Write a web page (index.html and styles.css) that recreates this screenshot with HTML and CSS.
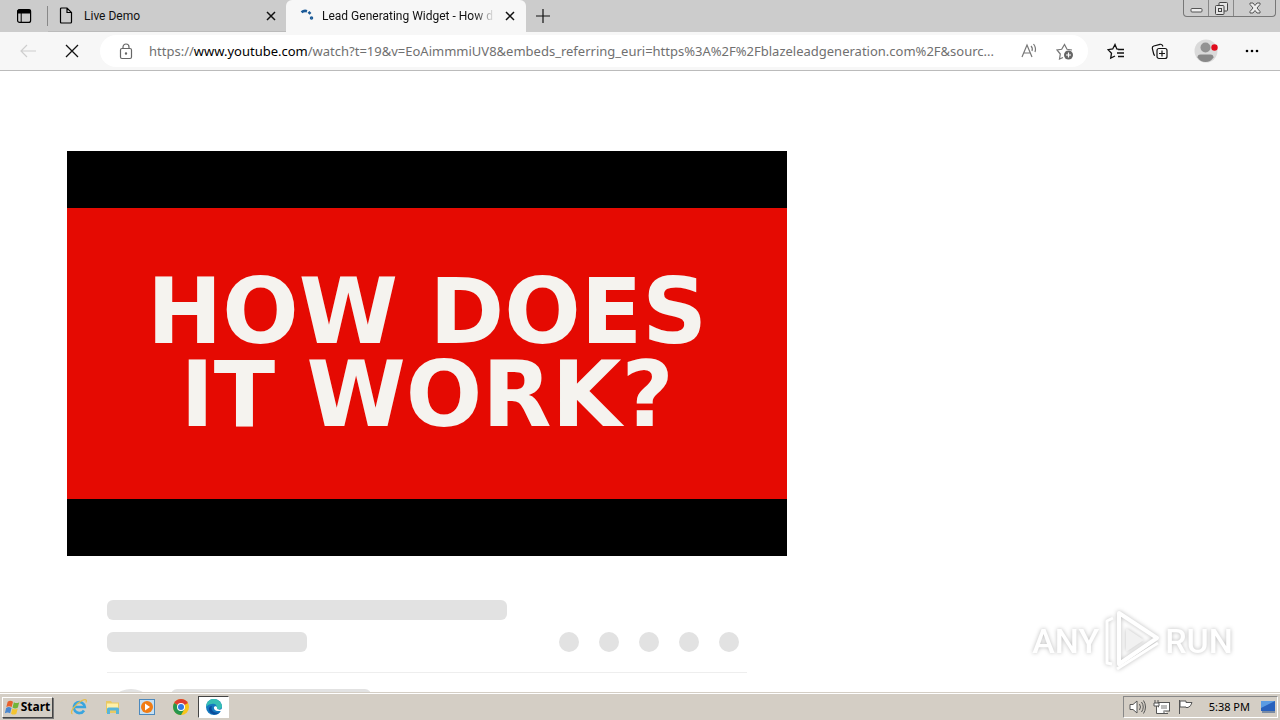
FILE: index.html
```html
<!DOCTYPE html>
<html lang="en">
<head>
<meta charset="utf-8">
<meta name="viewport" content="width=device-width, initial-scale=1">
<title>Lead Generating Widget - How does it work?</title>
<link rel="stylesheet" href="styles.css">
</head>
<body>
<header class="tabs">
  <button class="tab-actions" aria-label="Tab actions">
    <svg width="16" height="16" viewBox="0 0 16 16" fill="none" stroke="#000"><rect x="1.6" y="1.6" width="13" height="12.8" rx="2" stroke-width="1.2"/><path d="M2 2h12.500v3H2z" fill="#000"/><path d="M5.200 5v9"/></svg>
  </button>
  <div class="tab">
    <svg width="14" height="17" viewBox="0 0 14 17" fill="none" stroke="#000" stroke-width="1.200"><path d="M2.500 1H8l4.500 4.500V15q0 1-1 1h-9q-1 0-1-1V2q0-1 1-1zM8 1v4.500h4.500"/></svg>
    <span class="tab-title">Live Demo</span>
    <button class="close" aria-label="Close tab"><svg width="10" height="10" viewBox="0 0 10 10" stroke="#111" stroke-width="1.500"><path d="M1 1l8 8M9 1L1 9"/></svg></button>
  </div>
  <div class="tab active">
    <svg width="14" height="16" viewBox="0 0 14 16" fill="none" stroke="#1b5a97" stroke-width="2.600"><path d="M1.500 4.200Q4 2.300 7 3.200M8.500 3.900l2 2"/><circle cx="11.500" cy="10" r="1" stroke-width="1.500"/></svg>
    <span class="tab-title fade">Lead Generating Widget - How d</span>
    <button class="close" aria-label="Close tab"><svg width="10" height="10" viewBox="0 0 10 10" stroke="#111" stroke-width="1.500"><path d="M1 1l8 8M9 1L1 9"/></svg></button>
  </div>
  <button class="new-tab" aria-label="New tab"><svg width="14" height="14" viewBox="0 0 14 14" stroke="#111" stroke-width="1.200"><path d="M7 0v14M0 7h14"/></svg></button>
  <div class="window-buttons">
    <button aria-label="Minimize"><svg width="13" height="12" viewBox="0 0 13 12" fill="#eee" stroke="#555"><rect x="1" y="6.500" width="11" height="3.500" rx="1"/></svg></button>
    <button aria-label="Restore"><svg width="13" height="13" viewBox="0 0 13 13" fill="#e4e4e4" stroke="#444"><rect x="4" y=".5" width="8.500" height="8.500" rx="1"/><rect x=".5" y="3.500" width="8.500" height="9" rx="1"/><rect x="3.500" y="6.500" width="3" height="3"/></svg></button>
    <button class="wide" aria-label="Close"><svg width="12" height="12" viewBox="0 0 12 12" fill="#eee" stroke="#555"><path d="M1 1h3l2 2.500L8 1h3v1.500L8 6l3 3.500V11H8L6 8.500 4 11H1V9.500L4 6 1 2.500z"/></svg></button>
  </div>
</header>
<nav class="toolbar">
  <button class="nav" aria-label="Back" disabled><svg width="17" height="14" viewBox="0 0 17 14" fill="none" stroke="#cecece" stroke-width="1.200"><path d="M16 7H1M7 1L1 7l6 6"/></svg></button>
  <button class="nav stop" aria-label="Stop loading"><svg width="14" height="14" viewBox="0 0 14 14" stroke="#111" stroke-width="1.300"><path d="M1 1l12 12M13 1L1 13"/></svg></button>
  <div class="address">
    <button aria-label="Site information"><svg width="14" height="17" viewBox="0 0 14 17" fill="none" stroke="#666" stroke-width="1.200"><rect x="1.500" y="5.500" width="11" height="10" rx="1.500"/><path d="M4 5.500V4a3 3 0 0 1 6 0v1.500"/><circle cx="7" cy="10.500" r=".6" fill="#666"/></svg></button>
    <div class="url" role="textbox" aria-label="Address" contenteditable="true" spellcheck="false">https://<b>www.youtube.com</b>/watch?t=19&amp;v=EoAimmmiUV8&amp;embeds_referring_euri=https%3A%2F%2Fblazeleadgeneration.com%2F&amp;sourc...</div>
    <button aria-label="Read aloud"><svg width="17" height="16" viewBox="0 0 17 16" fill="none" stroke="#777" stroke-width="1.200"><path d="M1 14L6 2l5 12M3 10h6M10 3q2 2 1 5M12.500 1q3 4 1.500 8"/></svg></button>
    <button aria-label="Add to favorites"><svg width="18" height="17" viewBox="0 0 18 17" fill="none" stroke="#777" stroke-width="1.200"><path d="M7 14.500l-3.500 1.500.8-5L1 7l4.700-.7L8.500 1.500l2.500 4.800 5 .7"/><circle cx="12.500" cy="12" r="4.500" fill="#666" stroke="none"/><path d="M12.500 9.500v5M10 12h5" stroke="#fff"/></svg></button>
  </div>
  <button class="tool" aria-label="Favorites"><svg width="18" height="17" viewBox="0 0 18 17" fill="none" stroke="#111" stroke-width="1.300"><path d="M12 6.300L9.800 6 8 1.500 5.700 6 1 6.700l3.500 3.500-.8 5L8 13M11 6.500h6M10 10h7M11 13.500h6"/></svg></button>
  <button class="tool" aria-label="Collections"><svg width="18" height="17" viewBox="0 0 18 17" fill="none" stroke="#111" stroke-width="1.200"><rect x="6" y="5.500" width="10" height="10" rx="2"/><path d="M11 7.500v6M8 10.500h6M4 12.500q-1-.3-1.300-1.500L1.300 5.500Q1 3.500 2.800 3L9 1.300q2-.3 2.600 1.400l.3.800"/></svg></button>
  <button class="tool profile" aria-label="Profile"><svg width="24" height="24" viewBox="0 0 24 24"><circle cx="12" cy="12" r="11.500" fill="#dadada"/><circle cx="11.500" cy="8.500" r="5" fill="#929292"/><path d="M3.500 18.500q0-3 3-3h10q3 0 3 3-3 4.500-8 4.500t-8-4.500z" fill="#888"/><circle cx="20.500" cy="8.500" r="3.200" fill="#e00b1c"/></svg></button>
  <button class="tool" aria-label="Settings and more"><svg width="14" height="4" viewBox="0 0 14 4"><circle cx="2" cy="2" r="1.300"/><circle cx="7" cy="2" r="1.300"/><circle cx="12" cy="2" r="1.300"/></svg></button>
</nav>
<main class="page">
  <section class="watch">
    <div class="player"><h1><span>HOW DOES</span><span>IT WORK?</span></h1></div>
    <div class="skeleton">
      <div class="bar long"></div>
      <div class="row"><div class="bar"></div><div class="dots"><i></i><i></i><i></i><i></i><i></i></div></div>
      <div class="owner"><div class="avatar"></div><div class="bar"></div></div>
    </div>
  </section>
  <div class="watermark"><span>ANY</span>
    <svg width="60" height="62" viewBox="0 0 60 62" fill="none" stroke="#fff" stroke-width="4" stroke-linejoin="round"><path d="M17 48V3l38 25L17 54V13"/><path d="M11 8L5 11v42l5 1M15 59l41-26" stroke-width="3"/><path d="M24 18l18 12-18 12z" fill="#f1f1f1" stroke="none"/></svg>
    <span>RUN</span></div>
</main>
<footer class="taskbar">
  <button class="start"><svg width="16" height="17" viewBox="0 0 18 17"><path d="M3 2q3-2 6 0L7.500 8q-3-2-6 0z" fill="#e8602c"/><path d="M10 2.500q3 2 6 0l-1.500 6q-3 2-6 0z" fill="#72b43a"/><path d="M1.300 9q3-2 6 0l-1.500 6q-3-2-6 0z" fill="#4a87cf"/><path d="M8.300 9.500q3 2 6 0l-1.500 6q-3 2-6 0z" fill="#f4c430"/></svg>Start</button>
  <button class="task" aria-label="Internet Explorer"><svg width="18" height="18" viewBox="0 0 18 18" fill="none"><path d="M14 12.500a5.500 5.500 0 1 1 .8-3.500H5" stroke="#39a5df" stroke-width="2.600"/><path d="M2.500 16C-1 15 5 6 12 2.500c4-2 5-.5 4 2" stroke="#e5bd4a" stroke-width="1.300"/></svg></button>
  <button class="task" aria-label="Windows Explorer"><svg width="18" height="18" viewBox="0 0 18 18"><path d="M2 3h5l1 1.500h7V15H2z" fill="#e9c963"/><path d="M3 5.500h11V12H3z" fill="#fff0a8"/><path d="M3 16v-5q0-1.500 1.500-1.500h9Q15 9.500 15 11v5h-3v-3.500H6V16z" fill="#58b5d9"/></svg></button>
  <button class="task" aria-label="Media Player"><svg width="18" height="18" viewBox="0 0 18 18"><rect x="1.500" y="1.500" width="15" height="15" fill="#c6e0f3" stroke="#4c89bd"/><circle cx="9" cy="9" r="6" fill="#f17c13"/><path d="M7 5.500l5 3.500-5 3.500z" fill="#fff"/></svg></button>
  <button class="task" aria-label="Chrome"><svg width="18" height="18" viewBox="0 0 18 18"><circle cx="9" cy="9" r="8" fill="#f8c51b"/><path d="M9 9L2.100 5A8 8 0 0 1 15.900 5z" fill="#df3d31"/><path d="M9 9L2.100 5A8 8 0 0 0 9 17l3.500-6z" fill="#26964e"/><circle cx="9" cy="9" r="4" fill="#fff"/><circle cx="9" cy="9" r="3" fill="#327ae4"/></svg></button>
  <button class="task current" aria-label="Microsoft Edge"><svg width="18" height="18" viewBox="0 0 18 18"><circle cx="9" cy="9" r="8" fill="#1479bf"/><path d="M1.500 7C3-1 15-1 17 8c0 4-5 4-6 2 2-2-1-5-4-4Q3 6 1.500 9z" fill="#36bfb4"/><path d="M7 8c-2 4 2 8 7.500 6.500C10 19 3 15 4 10q.5-2 3-2z" fill="#0b4c9b"/><path d="M9 9c-.5 2 1 4 4 4h5l.5-2.500c-2 1.500-6 1.500-6.500 0 .5-2-2-3-3-1.500z" fill="#fff"/></svg></button>
  <div class="tray">
    <svg width="18" height="16" viewBox="0 0 18 16" fill="#fff" stroke="#555"><path d="M1 5.500h3L8 2v12l-4-3.500H1z"/><path d="M10.500 5q2 3 0 6M12.500 3q3.500 5 0 10M14.500 1.500q4 6.500 0 13" fill="none"/></svg>
    <svg width="18" height="16" viewBox="0 0 18 16" fill="#fff" stroke="#555"><rect x="5.500" y="3.500" width="11" height="8.500"/><rect x="8" y="6" width="6" height="4" fill="#bbb" stroke="none"/><path d="M2 1v3M5 1v3M1 4h5v3H1zM3.500 7v7.500H15M11 12v2"/></svg>
    <svg width="18" height="16" viewBox="0 0 18 16" fill="#fff" stroke="#555"><path d="M2.500 1v14M3 2h6v1.500h6q-1 4-4 5H9V8H3z"/></svg>
    <time>5:38 PM</time>
    <svg width="16" height="14" viewBox="0 0 16 14"><path d="M1 1h14v10H1z" fill="#2861bd"/><path d="M1 1h14L1 8z" fill="#5a9be3"/><path d="M2 12h13" stroke="#234a82"/></svg>
  </div>
</footer>
</body>
</html>
```
FILE: styles.css
```css
* { box-sizing: border-box; }
body { margin: 0; height: 100vh; display: flex; flex-direction: column; overflow: hidden; background: #fff; color: #111; font: 12px/16px "Noto Sans", sans-serif; }
button { display: flex; align-items: center; justify-content: center; flex: none; padding: 0; border: 0; background: none; color: inherit; font: inherit; }
svg { display: block; flex: none; }

.tabs { flex: none; height: 32px; display: flex; background: #ccc; font-family: Roboto, sans-serif; }
.tab-actions { width: 48px; border-right: 1px solid #888; margin: 6px 0; height: 20px; }
.tab { display: flex; align-items: center; gap: 11px; width: 238px; padding: 0 8px 0 11px; border-bottom: 1px solid #bbb; }
.tab.active { width: 240px; padding: 0 9px 0 14px; gap: 8px; border: 0; background: #f7f7f7; border-radius: 6px 6px 0 0; }
.tab-title { flex: 1; min-width: 0; white-space: nowrap; }
.fade { mask-image: linear-gradient(90deg, #000 88%, transparent); }
.close { width: 14px; height: 16px; }
.new-tab { width: 34px; }
.window-buttons { display: flex; height: 17px; margin: 0 4px 0 auto; border: 1px solid #777; border-top: 0; border-radius: 0 0 4px 4px; }
.window-buttons button { width: 25px; border-right: 1px solid #888; }
.window-buttons .wide { width: 41px; border: 0; }

.toolbar { flex: none; height: 39px; display: flex; align-items: center; padding: 0 6px; background: #f7f7f7; border-bottom: 1px solid #bbb; }
.nav { width: 44px; height: 28px; }
.address { flex: 1; min-width: 0; height: 32px; display: flex; align-items: center; margin: 0 6px; padding: 0 14px 0 19px; gap: 18px; background: #fff; border-radius: 16px; }
.url { flex: 1; min-width: 0; margin-left: -2px; white-space: nowrap; font-size: 13px; line-height: 20px; color: #707070; outline: 0; }
.url b { font-weight: 400; color: #000; }
.tool { width: 44px; height: 28px; }
.profile { width: 48px; }

.page { flex: 1; min-height: 0; position: relative; overflow: hidden; padding: 80px 67px 0; }
.watch { max-width: 720px; }
.player { aspect-ratio: 16 / 9; display: flex; align-items: center; background: #000; }
.player h1 { flex: 1; margin: 0; padding: 62px 0 63px; background: #e50a02; color: #f5f3ef; font: 700 90px/83px "DejaVu Sans", sans-serif; text-align: center; white-space: nowrap; }
.player h1 span { display: block; }
.skeleton { padding: 44px 40px 0; }
.bar { width: 200px; height: 20px; border-radius: 6px; background: #e2e2e2; }
.long { width: 400px; }
.row { display: flex; justify-content: space-between; margin-top: 12px; padding: 0 8px 20px 0; border-bottom: 1px solid #eee; }
.dots { display: flex; gap: 20px; }
.dots i { width: 20px; height: 20px; border-radius: 50%; background: #e2e2e2; }
.owner { display: flex; gap: 16px; padding: 16px 0 0 0; }
.avatar { width: 48px; height: 48px; border-radius: 50%; background: #e2e2e2; }

.watermark { position: absolute; right: 47px; bottom: 20px; display: flex; align-items: center; gap: 3px; color: #fff; font: 500 34px/40px Roboto, sans-serif; filter: drop-shadow(0 0 2px #bbb); }

.taskbar { flex: none; height: 28px; display: flex; align-items: center; padding: 2px 2px 1px; background: #d4cec5; border-top: 1px solid #d4cec5; box-shadow: inset 0 1px #fff; }
.start { width: 51px; height: 21px; margin-right: 9px; border: 1px solid; border-color: #fff #444 #444 #fff; box-shadow: 1px 1px #777; font-weight: 700; color: #000; }
.task { width: 34px; height: 22px; }
.current { width: 31px; background: #fff; border: 1px solid; border-color: #444 #fff #fff #444; }
.tray { display: flex; align-items: center; gap: 6px; height: 22px; margin-left: auto; padding: 0 1px 0 5px; border: 1px solid; border-color: #888 #fff #fff #888; color: #000; font: 11px/16px "Noto Sans", sans-serif; }
.tray time { margin: 0 4px 0 8px; }
```
